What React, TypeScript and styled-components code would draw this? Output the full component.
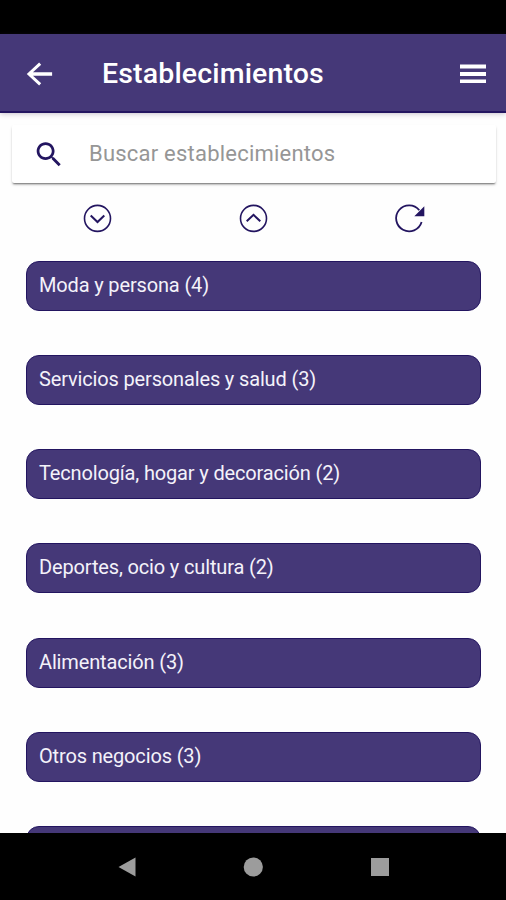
import React from "react";
import styled, { createGlobalStyle } from "styled-components";

const PURPLE = "#453878";
const INK = "#231560";

const GlobalStyle = createGlobalStyle`
  *, *::before, *::after { box-sizing: border-box; }
  body { margin: 0; background: #fff; }
`;

const Screen = styled.div`
  display: flex;
  flex-direction: column;
  width: 506px;
  height: 900px;
  overflow: hidden;
  background: #fefefe;
  font-family: Roboto, "Liberation Sans", sans-serif;
`;

const StatusBar = styled.div`
  flex: none;
  height: 34px;
  background: #000;
`;

const Header = styled.header`
  flex: none;
  display: flex;
  align-items: center;
  height: 79px;
  padding: 2px 20px 0 21px;
  background: ${PURPLE};
  border-bottom: 2px solid ${INK};
  box-shadow: 0 1px 5px rgba(60, 40, 80, 0.28);
`;

const IconButton = styled.button`
  display: flex;
  flex: none;
  padding: 0;
  border: 0;
  background: none;
  color: inherit;
`;

const HeaderIcon = styled(IconButton)`
  color: #fff;
`;

const Title = styled.h1`
  flex: 1;
  margin: 0 0 0 43px;
  color: #fff;
  font-size: 28.5px;
  font-weight: 500;
  line-height: 36px;
  letter-spacing: 0.15px;
  white-space: nowrap;
`;

const Content = styled.main`
  flex: 1;
  min-height: 0;
  overflow: hidden;
`;

const SearchBar = styled.label`
  display: flex;
  align-items: center;
  height: 58px;
  margin: 12px 10px 0 12px;
  padding-left: 20px;
  background: #fff;
  border-radius: 2px;
  box-shadow: 0 2px 2px -1px rgba(0, 0, 0, 0.5), 0 2px 3px rgba(0, 0, 0, 0.12);
  color: ${INK};
`;

const SearchInput = styled.input`
  flex: 1;
  min-width: 0;
  height: 40px;
  margin-left: 24px;
  padding: 0;
  border: 0;
  outline: 0;
  background: none;
  font: 400 22px/40px Roboto, "Liberation Sans", sans-serif;
  letter-spacing: 0.22px;
  &::placeholder { color: #969696; opacity: 1; }
`;

const Actions = styled.div`
  display: grid;
  grid-template-columns: repeat(3, 1fr);
  justify-items: center;
  margin: 19px 19px 0;
  height: 32px;
  color: ${INK};
`;

const CategoryList = styled.ul`
  display: flex;
  flex-direction: column;
  gap: 44.2px;
  margin: 26.8px 25px 0 26px;
  padding: 0;
  list-style: none;
`;

const Category = styled.li`
  height: 50px;
  padding: 0 12px;
  background: ${PURPLE};
  border: 1px solid ${INK};
  border-radius: 13px;
  color: #f4f2fa;
  font-size: 20px;
  line-height: 46px;
  letter-spacing: -0.15px;
  white-space: nowrap;
`;

const NavBar = styled.nav`
  flex: none;
  display: grid;
  grid-template-columns: repeat(3, 126.5px);
  justify-content: center;
  justify-items: center;
  align-items: center;
  height: 67px;
  background: #000;
  color: #9c9c9c;
`;

const categories = [
  { name: "Moda y persona", count: 4 },
  { name: "Servicios personales y salud", count: 3 },
  { name: "Tecnología, hogar y decoración", count: 2 },
  { name: "Deportes, ocio y cultura", count: 2 },
  { name: "Alimentación", count: 3 },
  { name: "Otros negocios", count: 3 },
];

const Chevron = ({ up }: { up?: boolean }) => (
  <svg width="32" height="32" viewBox="0 0 32 32" fill="none" stroke="currentColor">
    <circle cx="16.5" cy="16.4" r="13" strokeWidth="1.6" />
    <path d={up ? "M9.7 19.3 16.5 12.8l6.8 6.5" : "M9.7 13.5 16.5 20l6.8-6.5"} strokeWidth="2" />
  </svg>
);

const Reload = () => (
  <svg width="32" height="32" viewBox="0 0 32 32" fill="none" stroke="currentColor">
    <path d="M28.6 20A13 13 0 1 1 26.3 8.2" strokeWidth="1.8" />
    <path d="M31.3 4.2v10h-10z" fill="currentColor" stroke="none" />
  </svg>
);

export default function App() {
  return (
    <>
      <GlobalStyle />
      <Screen>
        <StatusBar />
        <Header>
          <HeaderIcon aria-label="Volver">
            <svg width="38" height="38" viewBox="0.35 0 24 24" fill="currentColor">
              <path d="M20 10.9H7.9l5.2-4.75L11.8 4.7 4 12l7.8 7.3 1.3-1.45L7.9 13.1H20z" />
            </svg>
          </HeaderIcon>
          <Title>Establecimientos</Title>
          <HeaderIcon aria-label="Menú">
            <svg width="26" height="20" viewBox="0 0 26 20" fill="currentColor">
              <path d="M0 .5h26v4H0zM0 8h26v4H0zM0 15.5h26v3.5H0z" />
            </svg>
          </HeaderIcon>
        </Header>
        <Content>
          <SearchBar>
            <svg width="33" height="33" viewBox="-0.4 0 24 24" fill="currentColor">
              <path d="M15.5 14h-.79l-.28-.27C15.41 12.59 16 11.11 16 9.5 16 5.91 13.09 3 9.5 3S3 5.91 3 9.5 5.91 16 9.5 16c1.61 0 3.09-.59 4.23-1.57l.27.28v.79l5 4.99L20.49 19l-4.99-5zm-6 0C7.01 14 5 11.99 5 9.5S7.01 5 9.5 5 14 7.01 14 9.5 11.99 14 9.5 14z" />
            </svg>
            <SearchInput placeholder="Buscar establecimientos" />
          </SearchBar>
          <Actions>
            <IconButton aria-label="Desplegar"><Chevron /></IconButton>
            <IconButton aria-label="Plegar"><Chevron up /></IconButton>
            <IconButton aria-label="Recargar"><Reload /></IconButton>
          </Actions>
          <CategoryList>
            {categories.map(({ name, count }) => (
              <Category key={name}>{name} ({count})</Category>
            ))}
            <Category />
          </CategoryList>
        </Content>
        <NavBar>
          <svg width="18" height="20" viewBox="0 0 18 20" fill="currentColor"><path d="M17.5.5v19L.5 10z" /></svg>
          <svg width="20" height="20" viewBox="0 0 20 20" fill="currentColor"><circle cx="10.3" cy="10" r="9.6" /></svg>
          <svg width="18" height="18" viewBox="0 0 18 18" fill="currentColor"><path d="M0 0h18v18H0z" /></svg>
        </NavBar>
      </Screen>
    </>
  );
}
